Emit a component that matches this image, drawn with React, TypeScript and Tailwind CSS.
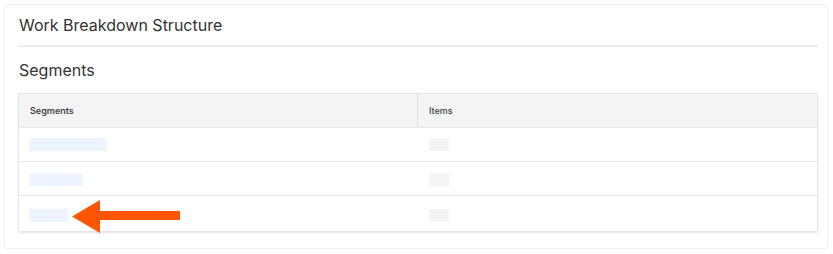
import React from 'react'

type Row = { segment: number; items: number }

const rows: Row[] = [
    { segment: 78, items: 20 },
    { segment: 54, items: 20 },
    { segment: 39, items: 20 },
]

function Pointer() {
    return (
        <svg className="absolute left-[72px] top-[200px]" width="110" height="33" viewBox="0 0 110 33">
            <polygon points="0,16.5 28,0 28,11 108,11 108,20 28,20 28,33" fill="#ff5500" />
        </svg>
    )
}

export default function App() {
    return (
        <div className="relative w-[833px] h-[254px] bg-white font-['Inter','Liberation_Sans',sans-serif]">
            <div className="absolute left-[4px] top-[4px] w-[824px] h-[245px] border border-[#f0f0f0] rounded-[3px] bg-white pl-[13px] pr-[9px]">
                <div className="h-[40px] flex items-center pl-[1px] text-[16px] text-[#333]">
                    Work Breakdown Structure
                </div>
                <div className="h-[2px] bg-[#ececec]" />
                <div className="h-[46px] flex items-center pl-[1px] text-[16px] text-[#333]">
                    Segments
                </div>
                <div className="border border-[#e6e6e6] rounded-[2px] shadow-[0_1px_2px_rgba(0,0,0,0.12)] overflow-hidden">
                    <div className="grid grid-cols-2 h-[34px] bg-[#f3f4f6] border-b border-[#e6e6e6] text-[9px] text-[#444]">
                        <div className="flex items-center pl-[11px] font-semibold border-r border-[#dedede]">Segments</div>
                        <div className="flex items-center pl-[11px] font-medium">Items</div>
                    </div>
                    {rows.map((row, idx) => {
                        const last = idx === rows.length - 1
                        return (
                            <div
                                key={idx}
                                className={`grid grid-cols-2 ${last ? 'h-[35px] pt-[4px]' : 'h-[34px] border-b border-[#e6e6e6]'} ${idx === 1 ? 'pt-[1px]' : ''}`}
                            >
                                <div className="flex items-center pl-[10px]">
                                    <span className="h-[13px] bg-[#eef4fd]" style={{ width: row.segment }} />
                                </div>
                                <div className="flex items-center pl-[11px]">
                                    <span className="h-[13px] bg-[#f3f4f6]" style={{ width: row.items }} />
                                </div>
                            </div>
                        )
                    })}
                </div>
            </div>
            <Pointer />
        </div>
    )
}
